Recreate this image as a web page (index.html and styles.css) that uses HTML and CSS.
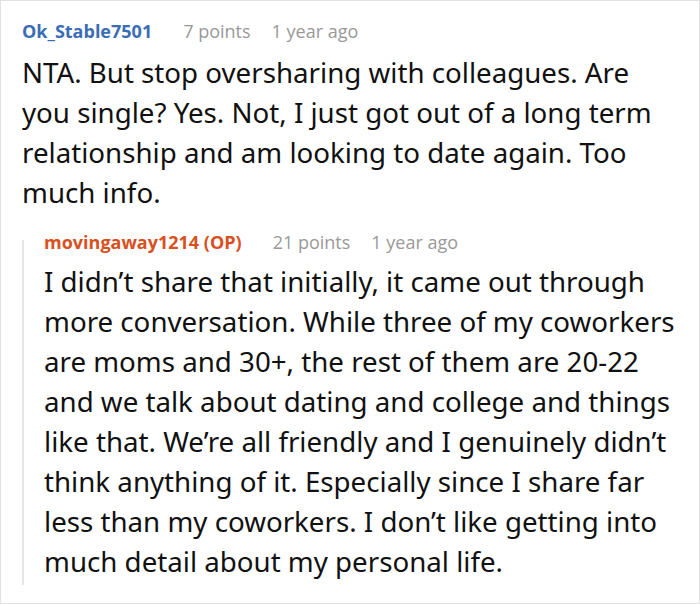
FILE: index.html
```html
<!DOCTYPE html>
<html>
<head>
<meta charset="utf-8">
<link rel="stylesheet" href="styles.css">
</head>
<body>
<div class="card">
  <div class="comment">
    <div class="meta"><span class="user">Ok_Stable7501</span><span class="info">7 points</span><span class="info">1 year ago</span></div>
    <p class="text">NTA. But stop oversharing with colleagues. Are you single? Yes. Not, I just got out of a long term relationship and am looking to date again. Too much info.</p>
  </div>
  <div class="reply">
    <div class="meta"><span class="user op">movingaway1214 (OP)</span><span class="info">21 points</span><span class="info">1 year ago</span></div>
    <p class="text">I didn’t share that initially, it came out through more conversation. While three of my coworkers are moms and 30+, the rest of them are 20-22 and we talk about dating and college and things like that. We’re all friendly and I genuinely didn’t think anything of it. Especially since I share far less than my coworkers. I don’t like getting into much detail about my personal life.</p>
  </div>
</div>
</body>
</html>
```
FILE: styles.css
```css
html, body {
  margin: 0;
  padding: 0;
  background: #fff;
}
.card {
  box-sizing: border-box;
  width: 700px;
  height: 604px;
  border: 1px solid #e2e2e2;
  padding: 18px 18px 0 21px;
  font-family: "Open Sans", "Noto Sans", sans-serif;
  color: #111;
}
.meta {
  font-size: 18px;
  line-height: 24px;
  display: flex;
  gap: 21px;
}
.user {
  font-weight: 700;
  color: #3a6db5;
  margin-right: 10px;
}
.user.op {
  color: #d9501e;
}
.info {
  color: #999;
}
.text {
  margin: 9px 0 0;
  font-family: "Noto Sans", "Open Sans", sans-serif;
  font-size: 27.7px;
  line-height: 40px;
}
.reply {
  position: relative;
  margin-top: 18px;
  padding: 0 0 4px 22px;
}
.reply::before {
  content: "";
  position: absolute;
  left: 0;
  top: 10px;
  bottom: 0;
  width: 2px;
  background: #e6e6e6;
}
.reply .text {
  margin-top: 7px;
}
```
